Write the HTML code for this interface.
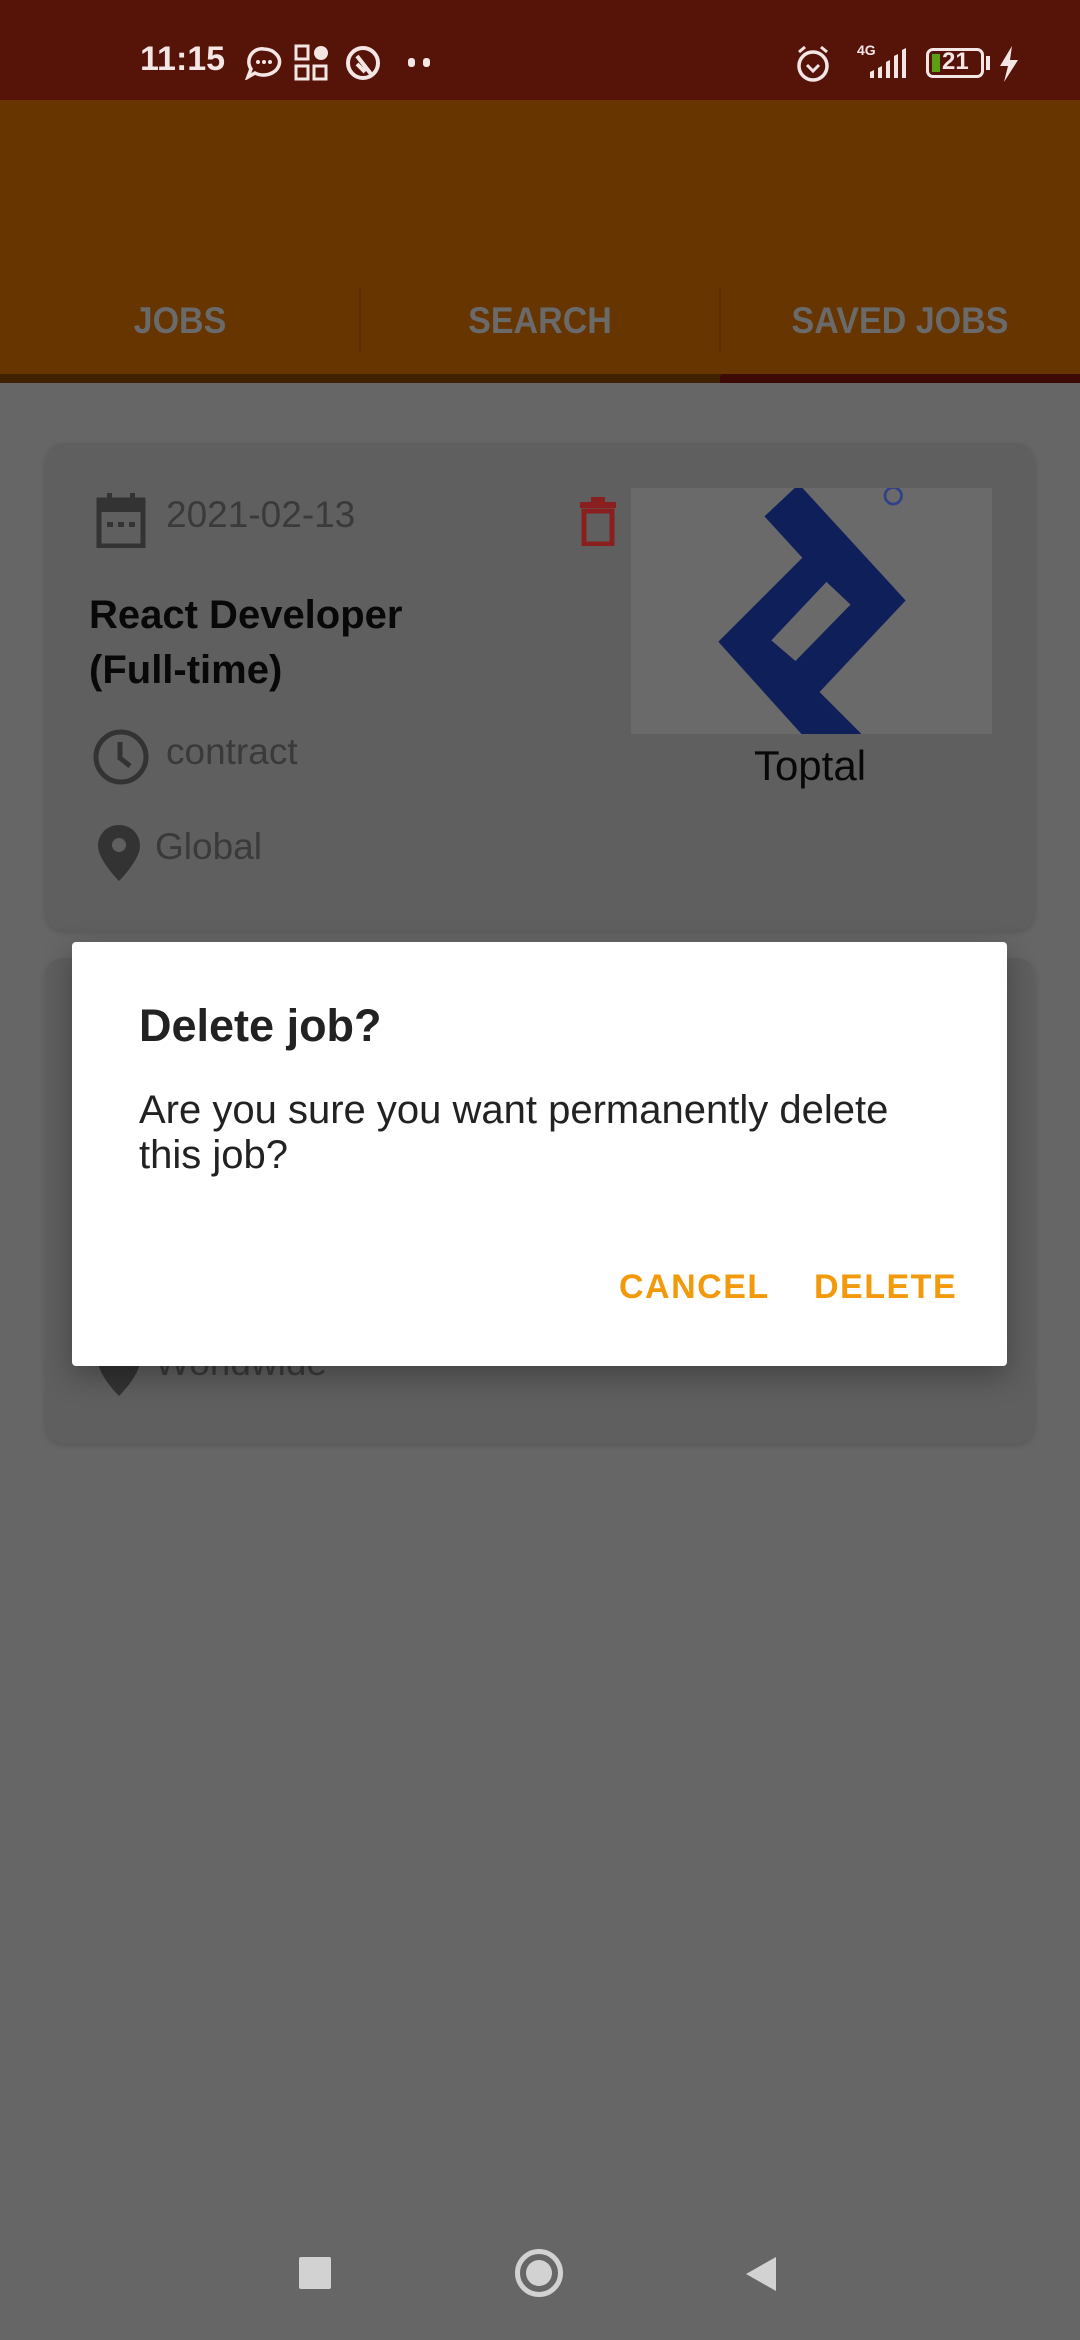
<!DOCTYPE html>
<html><head><meta charset="utf-8"><style>
*{margin:0;padding:0;box-sizing:border-box}
body{width:1080px;height:2340px;background:#666;position:relative;overflow:hidden;font-family:"Liberation Sans",Roboto,sans-serif}
.abs{position:absolute}
.sb{left:0;top:0;width:1080px;height:100px;background:#561409;color:#f3e6e4}
.app{left:0;top:100px;width:1080px;height:278px;background:#663500}
.tab{top:300px;font-size:37px;font-weight:bold;color:#6a6a6a;width:360px;text-align:center;transform:scaleX(0.92)}
.card{left:45px;width:990px;background:#5f5f5f;border-radius:18px;box-shadow:0 3px 6px rgba(0,0,0,0.12)}
.dlg{left:72px;top:942px;width:935px;height:424px;background:#fff;border-radius:4px;box-shadow:0 10px 30px rgba(0,0,0,0.3)}
.btn{top:1268px;font-size:34px;font-weight:bold;color:#f39a0c;letter-spacing:1.5px}
</style></head><body>
<div class="abs sb">
 <div class="abs" style="left:140px;top:40px;font-size:34px;font-weight:bold">11:15</div>
 <svg class="abs" style="left:244px;top:46px" width="40" height="34" viewBox="0 0 40 34"><path d="M20 3a16 13 0 1 1-9 24l-7 4 3-8A13 13 0 0 1 20 3z" fill="none" stroke="#f3e6e4" stroke-width="3.5"/><circle cx="14" cy="16" r="2" fill="#f3e6e4"/><circle cx="20" cy="16" r="2" fill="#f3e6e4"/><circle cx="26" cy="16" r="2" fill="#f3e6e4"/></svg>
 <svg class="abs" style="left:294px;top:44px" width="36" height="38" viewBox="0 0 36 38"><rect x="2" y="2" width="12" height="13" fill="none" stroke="#f3e6e4" stroke-width="3"/><circle cx="27" cy="9" r="7" fill="#f3e6e4"/><rect x="2" y="22" width="12" height="13" fill="none" stroke="#f3e6e4" stroke-width="3"/><rect x="20" y="22" width="12" height="13" fill="none" stroke="#f3e6e4" stroke-width="3"/></svg>
 <svg class="abs" style="left:345px;top:44px" width="36" height="38" viewBox="0 0 36 38"><circle cx="18" cy="19" r="15" fill="none" stroke="#f3e6e4" stroke-width="4"/><path d="M12 12l14 18M12 20l8 8" stroke="#f3e6e4" stroke-width="4"/></svg>
 <div class="abs" style="left:408px;top:58px;width:7px;height:9px;background:#f3e6e4;border-radius:3px"></div>
 <div class="abs" style="left:423px;top:58px;width:7px;height:9px;background:#f3e6e4;border-radius:3px"></div>
 <svg class="abs" style="left:795px;top:44px" width="36" height="40" viewBox="0 0 36 40"><circle cx="18" cy="22" r="14" fill="none" stroke="#f3e6e4" stroke-width="3.5"/><path d="M12 21l6 6 6-6M4 8l6-5M32 8l-6-5" fill="none" stroke="#f3e6e4" stroke-width="3"/></svg>
 <div class="abs" style="left:857px;top:42px;font-size:14px;font-weight:bold">4G</div>
 <svg class="abs" style="left:852px;top:46px" width="56" height="34" viewBox="0 0 56 34"><path d="M18 32v-6l4-2v8zM26 32v-10l4-2v12zM34 32v-16l4-2v18zM42 32v-22l4-2v24zM50 32v-28l4-2v30z" fill="#f3e6e4"/></svg>
 <div class="abs" style="left:926px;top:48px;width:58px;height:30px;border:3.5px solid #f3e6e4;border-radius:7px"></div>
 <div class="abs" style="left:932px;top:54px;width:8px;height:18px;background:#5aa012"></div>
 <div class="abs" style="left:942px;top:48px;font-size:24px;font-weight:bold">21</div>
 <div class="abs" style="left:986px;top:56px;width:4px;height:14px;background:#f3e6e4"></div>
 <svg class="abs" style="left:998px;top:46px" width="22" height="36" viewBox="0 0 22 36"><path d="M14 0L2 20h8l-4 16 14-22h-8z" fill="#f3e6e4"/></svg>
</div>
<div class="abs app"></div>
<div class="abs tab" style="left:0">JOBS</div>
<div class="abs tab" style="left:360px">SEARCH</div>
<div class="abs tab" style="left:720px">SAVED JOBS</div>
<div class="abs" style="left:359px;top:288px;width:2px;height:64px;background:#5a2e00"></div>
<div class="abs" style="left:719px;top:288px;width:2px;height:64px;background:#5a2e00"></div>
<div class="abs" style="left:0;top:374px;width:1080px;height:9px;background:#412200"></div>
<div class="abs" style="left:720px;top:374px;width:360px;height:9px;background:#3e0a06;border-radius:4px 0 0 0"></div>

<div class="abs card" style="top:443px;height:487px"></div>
<div class="abs card" style="top:958px;height:485px"></div>
<svg class="abs" style="left:95px;top:492px" width="52" height="56" viewBox="0 0 52 56"><path d="M4 8h44v46H4z" fill="none" stroke="#333" stroke-width="5"/><rect x="4" y="8" width="44" height="12" fill="#333"/><rect x="12" y="1" width="5" height="10" fill="#333"/><rect x="35" y="1" width="5" height="10" fill="#333"/><rect x="12" y="30" width="6" height="5" fill="#333"/><rect x="23" y="30" width="6" height="5" fill="#333"/><rect x="34" y="30" width="6" height="5" fill="#333"/></svg>
<div class="abs" style="left:166px;top:494px;font-size:37px;color:#3a3a3a">2021-02-13</div>
<svg class="abs" style="left:579px;top:496px" width="38" height="50" viewBox="0 0 38 50"><rect x="1" y="6" width="36" height="6" fill="#8a1f1f"/><rect x="12" y="1" width="14" height="6" fill="#8a1f1f"/><path d="M5 15h28v33H5z" fill="none" stroke="#8a1f1f" stroke-width="5"/></svg>
<div class="abs" style="left:89px;top:588px;font-size:40px;font-weight:bold;color:#080808;line-height:55px">React Developer<br>(Full-time)</div>
<svg class="abs" style="left:92px;top:728px" width="58" height="58" viewBox="0 0 58 58"><circle cx="29" cy="29" r="25" fill="none" stroke="#333" stroke-width="5"/><path d="M28 14v16l10 8" fill="none" stroke="#333" stroke-width="5"/></svg>
<div class="abs" style="left:166px;top:731px;font-size:37px;color:#3a3a3a">contract</div>
<svg class="abs" style="left:98px;top:825px" width="42" height="56" viewBox="0 0 42 56"><path d="M21 0C9 0 0 9 0 21c0 14 21 35 21 35s21-21 21-35C42 9 33 0 21 0z" fill="#333"/><circle cx="21" cy="20" r="7" fill="#5f5f5f"/></svg>
<div class="abs" style="left:155px;top:826px;font-size:37px;color:#3a3a3a">Global</div>
<div class="abs" style="left:631px;top:488px;width:361px;height:246px;background:#6a6a6a"></div>
<svg class="abs" style="left:0;top:0" width="1080" height="1000"><defs><clipPath id="c"><rect x="631" y="488" width="361" height="246"/></clipPath></defs><g clip-path="url(#c)"><g transform="translate(0,420) scale(0.6887)"><path fill-rule="evenodd" fill="#0e1f5a" d="M1110 140L1160 93L1315 262L1190 395L1250 455L1240 485L1190 485L1043 322L1165 200ZM1120 320L1200 235L1235 268L1155 350Z"/><circle cx="1297" cy="110" r="12" fill="none" stroke="#31408a" stroke-width="4"/></g></g></svg>
<div class="abs" style="left:660px;top:742px;width:300px;text-align:center;font-size:42px;color:#080808">Toptal</div>
<svg class="abs" style="left:98px;top:1340px" width="42" height="56" viewBox="0 0 42 56"><path d="M21 0C9 0 0 9 0 21c0 14 21 35 21 35s21-21 21-35C42 9 33 0 21 0z" fill="#333"/></svg>
<div class="abs" style="left:155px;top:1342px;font-size:37px;color:#3a3a3a">Worldwide</div>

<div class="abs dlg"></div>
<div class="abs" style="left:139px;top:1000px;font-size:45px;font-weight:bold;color:#222">Delete job?</div>
<div class="abs" style="left:139px;top:1088px;font-size:40px;color:#222;line-height:45px;width:820px">Are you sure you want permanently delete this job?</div>
<div class="abs btn" style="left:619px">CANCEL</div>
<div class="abs btn" style="left:814px">DELETE</div>

<div class="abs" style="left:299px;top:2257px;width:32px;height:32px;background:#d2d2d2;border-radius:2px"></div>
<div class="abs" style="left:515px;top:2249px;width:48px;height:48px;border:5px solid #d2d2d2;border-radius:50%"></div>
<div class="abs" style="left:526px;top:2260px;width:26px;height:26px;background:#d2d2d2;border-radius:50%"></div>
<svg class="abs" style="left:744px;top:2255px" width="34" height="38" viewBox="0 0 34 38"><path d="M32 2v34L2 19z" fill="#d2d2d2"/></svg>
</body></html>
